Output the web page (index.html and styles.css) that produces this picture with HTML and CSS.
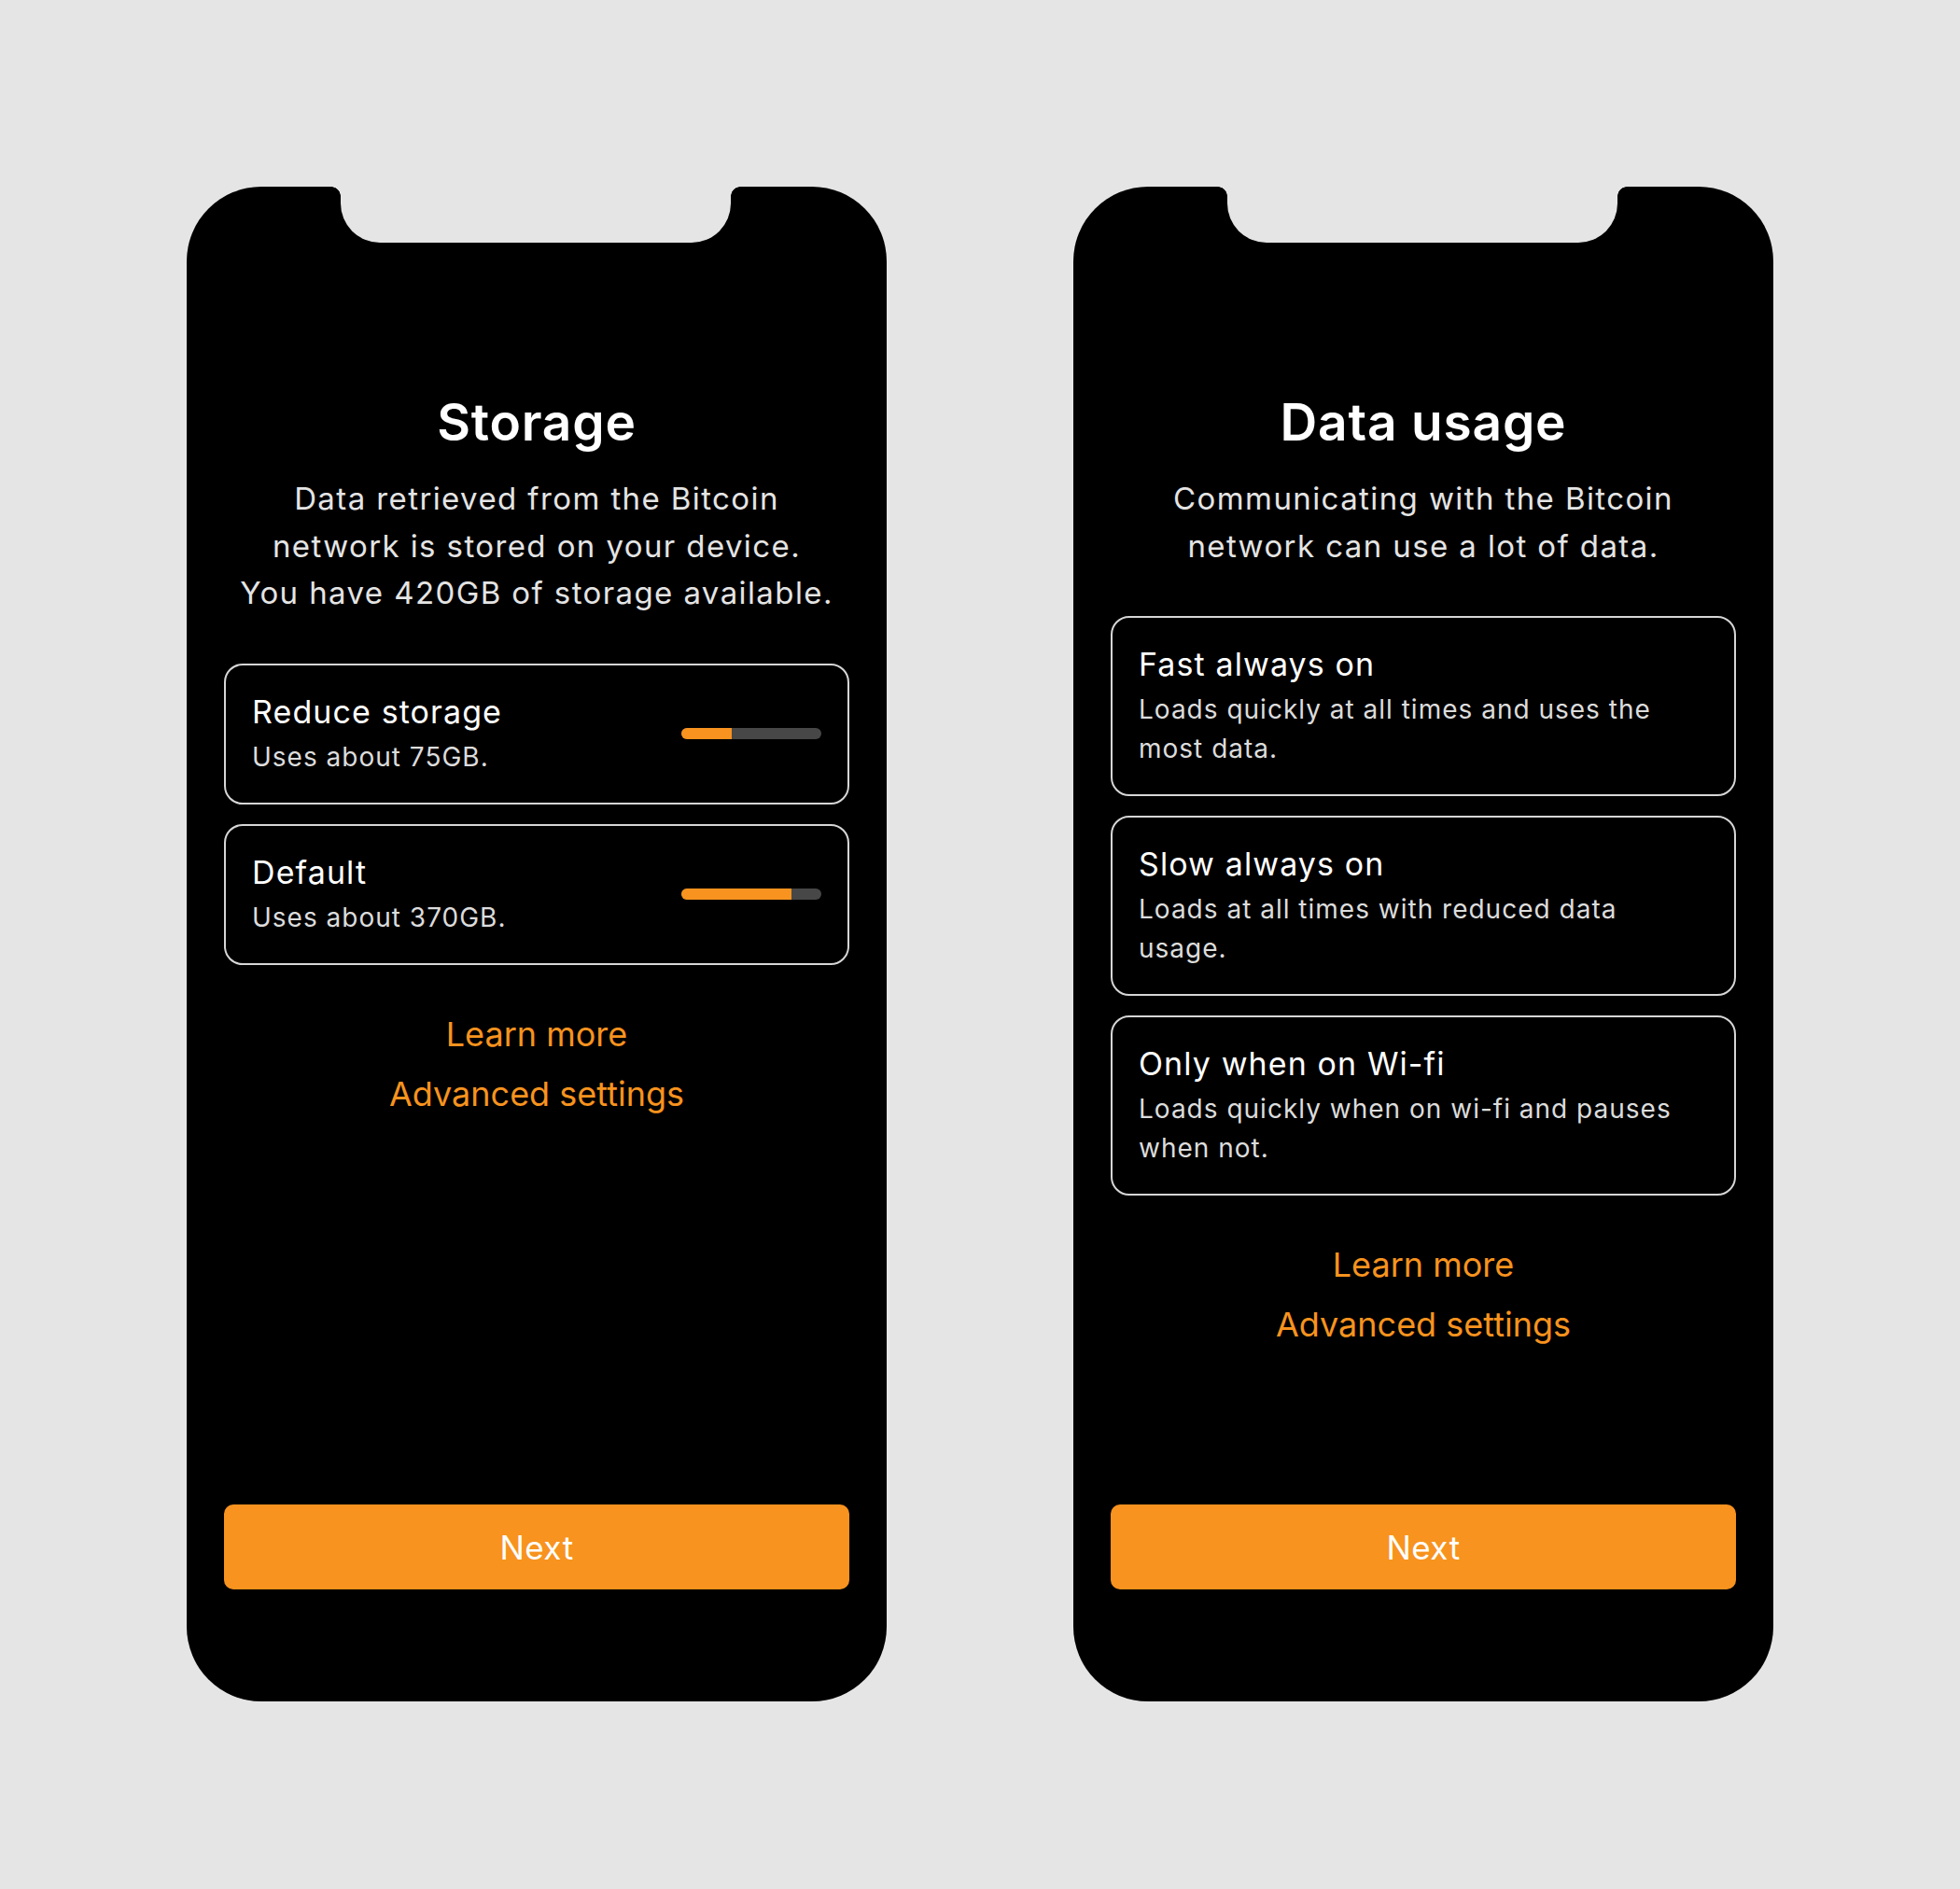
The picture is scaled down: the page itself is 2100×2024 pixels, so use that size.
FILE: index.html
```html
<!DOCTYPE html>
<html lang="en">
<head>
    <meta charset="UTF-8">
    <meta name="viewport" content="width=device-width, initial-scale=1.0">
    <title>Bitcoin node setup</title>
    <link rel="stylesheet" href="styles.css">
</head>
<body>

<div class="stage">

    <div class="phone">
        <div class="notch"></div>
        <h1 class="title">Storage</h1>
        <p class="intro">Data retrieved from the Bitcoin<br>network is stored on your device.<br>You have 420GB of storage available.</p>

        <div class="options">
            <div class="option">
                <div class="option-text">
                    <div class="option-name">Reduce storage</div>
                    <div class="option-desc">Uses about 75GB.</div>
                </div>
                <div class="meter"><div class="meter-fill" style="width: 54px"></div></div>
            </div>
            <div class="option">
                <div class="option-text">
                    <div class="option-name">Default</div>
                    <div class="option-desc">Uses about 370GB.</div>
                </div>
                <div class="meter"><div class="meter-fill" style="width: 118px"></div></div>
            </div>
        </div>

        <div class="links">
            <a href="#">Learn more</a>
            <a href="#">Advanced settings</a>
        </div>

        <button class="next-btn">Next</button>
    </div>

    <div class="phone">
        <div class="notch"></div>
        <h1 class="title">Data usage</h1>
        <p class="intro">Communicating with the Bitcoin<br>network can use a lot of data.</p>

        <div class="options">
            <div class="option">
                <div class="option-text wide">
                    <div class="option-name">Fast always on</div>
                    <div class="option-desc">Loads quickly at all times and uses the most data.</div>
                </div>
            </div>
            <div class="option">
                <div class="option-text wide">
                    <div class="option-name">Slow always on</div>
                    <div class="option-desc">Loads at all times with reduced data usage.</div>
                </div>
            </div>
            <div class="option">
                <div class="option-text wide">
                    <div class="option-name">Only when on Wi-fi</div>
                    <div class="option-desc">Loads quickly when on wi-fi and pauses when not.</div>
                </div>
            </div>
        </div>

        <div class="links">
            <a href="#">Learn more</a>
            <a href="#">Advanced settings</a>
        </div>

        <button class="next-btn">Next</button>
    </div>

</div>

</body>
</html>
```

FILE: styles.css
```css
html, body {
    margin: 0;
    background: #e5e5e5;
    font-family: Inter, "Noto Sans", sans-serif;
}

.stage {
    display: flex;
    justify-content: center;
    gap: 200px;
    padding-top: 200px;
    min-height: 1824px;
}

.phone {
    position: relative;
    box-sizing: border-box;
    width: 750px;
    height: 1623px;
    padding: 220px 40px 120px;
    background: #000;
    border-radius: 80px;
    display: flex;
    flex-direction: column;
    color: #fff;
}

.notch {
    position: absolute;
    top: 0;
    left: 165px;
    width: 418px;
    height: 60px;
    background: #e5e5e5;
    border-radius: 0 0 42px 42px;
}
.notch::before,
.notch::after {
    content: "";
    position: absolute;
    top: 0;
    width: 10px;
    height: 10px;
}
.notch::before {
    left: -10px;
    background: radial-gradient(circle at 0 100%, transparent 9.5px, #e5e5e5 10px);
}
.notch::after {
    right: -10px;
    background: radial-gradient(circle at 100% 100%, transparent 9.5px, #e5e5e5 10px);
}

.title {
    margin: 0;
    font-size: 55px;
    line-height: 64px;
    font-weight: 600;
    letter-spacing: 0.8px;
    text-align: center;
}

.intro {
    margin: 25px 0 0;
    font-size: 33px;
    line-height: 50.5px;
    letter-spacing: 1.4px;
    color: #e4e4e4;
    text-align: center;
}

.options {
    margin-top: 50px;
    display: flex;
    flex-direction: column;
    gap: 21px;
}

.option {
    display: flex;
    align-items: center;
    justify-content: space-between;
    border: 2px solid #d6d6d6;
    border-radius: 20px;
    padding: 28px 28px 28px;
}

.option-text.wide {
    max-width: 588px;
}

.option-name {
    font-size: 34px;
    line-height: 44px;
    letter-spacing: 1.1px;
}

.option-desc {
    margin-top: 5px;
    font-size: 28px;
    line-height: 42px;
    letter-spacing: 1px;
    color: #dcdcdc;
}

.meter {
    width: 150px;
    height: 12px;
    border-radius: 6px;
    background: #474747;
    overflow: hidden;
}
.meter-fill {
    height: 100%;
    background: #f7931e;
}

.links {
    margin-top: 42px;
    display: flex;
    flex-direction: column;
    align-items: center;
}
.links a {
    color: #f7931e;
    text-decoration: none;
    font-size: 36px;
    line-height: 64px;
}

.next-btn {
    margin-top: auto;
    height: 91px;
    border: none;
    border-radius: 10px;
    background: #f7931e;
    color: #fff;
    font-family: inherit;
    font-size: 35px;
    letter-spacing: 0.5px;
    cursor: pointer;
}
```
